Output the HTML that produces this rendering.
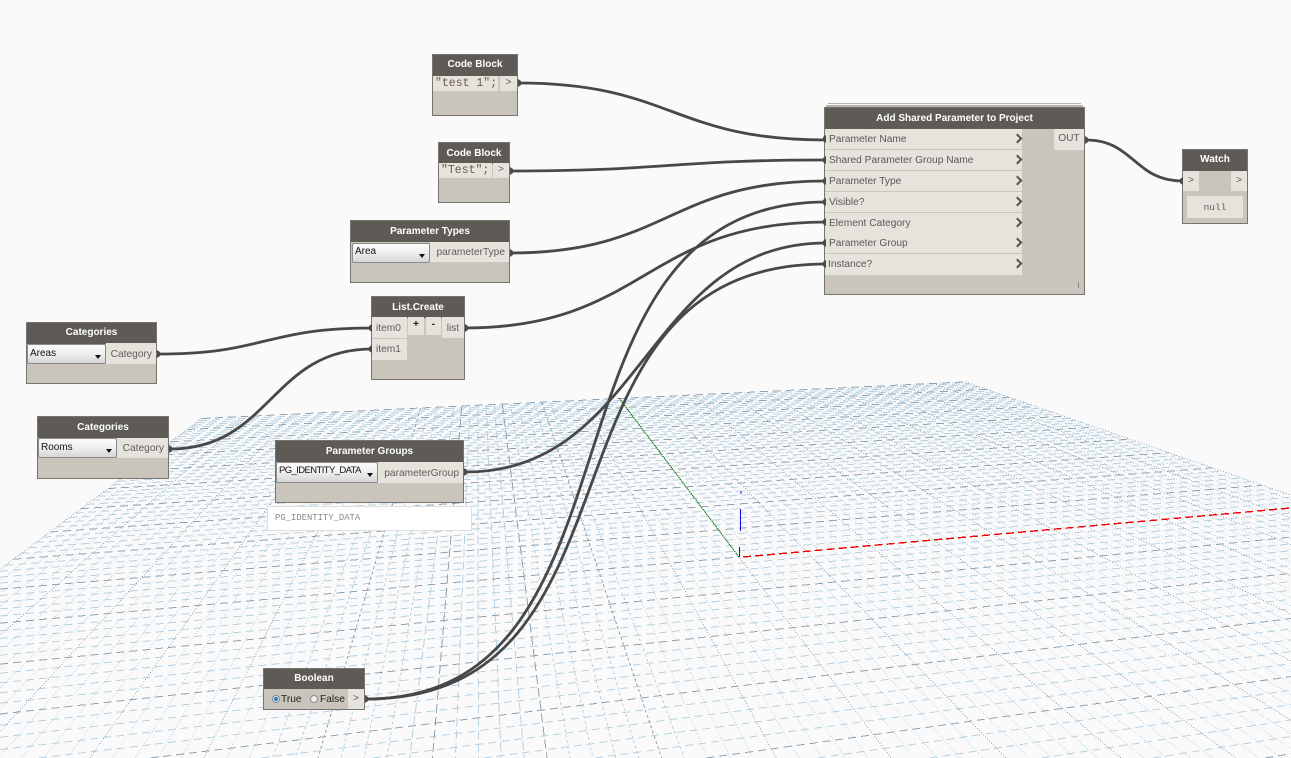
<!DOCTYPE html>
<html><head><meta charset="utf-8"><title>Dynamo graph</title>
<style>
html,body{margin:0;padding:0;width:1291px;height:758px;overflow:hidden;background:#fafafa}
body{position:relative;font-family:"Liberation Sans",sans-serif;font-size:10.2px;color:#5a5856}
svg{position:absolute;left:0;top:0;display:block}
.n{position:absolute;box-sizing:border-box;background:#c9c5bd;border:1px solid #77746f}
.h{position:absolute;left:0;right:0;top:0;background:#5e5b57;color:#fff;font-weight:bold;font-size:10px;text-align:center;line-height:21px}
.b{position:absolute;background:#e6e3dd;white-space:nowrap;color:#5f5d5a}
.c{position:absolute;box-sizing:border-box;background:linear-gradient(#fbfbfb,#f0f0f0 45%,#d6d6d6);border:1px solid #8b8b8b;border-radius:2px;color:#111;font-size:10px;line-height:11px;padding:2px 0 0 2px;white-space:nowrap}
.c:after{content:"";position:absolute;right:4px;top:10px;border:3px solid transparent;border-top:4px solid #111;border-bottom:0}
.m{font-family:"Liberation Mono",monospace}
.r{position:absolute;left:0;width:197px;height:20px;background:#e6e3dd;border-bottom:1px solid #c9c5bd;line-height:22px;padding-left:4px;box-sizing:border-box;white-space:nowrap}
.r:after{content:"";position:absolute;left:189px;top:6px;width:5px;height:5px;border-top:2px solid #55524f;border-right:2px solid #55524f;transform:rotate(45deg)}
.radio{position:absolute;width:8px;height:8px;border-radius:50%;border:1px solid #8a8a8a;box-sizing:border-box}
</style></head><body>
<svg id="g" width="1291" height="758" viewBox="0 0 1291 758"></svg>
<svg width="1291" height="758" viewBox="0 0 1291 758">
<g fill="none" shape-rendering="crispEdges">
<path d="M619 398L739 557" stroke="#0a7a0a" stroke-width="1" stroke-dasharray="1.5 .7"/>
<path d="M743 557L1291 508" stroke="#f00000" stroke-width="1.4" stroke-dasharray="8 4"/>
<path d="M741 491V494M740.5 509V531M739.5 547V557" stroke="#1010e0" stroke-width="1.2"/>
</g>
<g fill="none" stroke="#484848" stroke-width="2.8">
<path d="M518 83C672 83 672 140 826 140"/>
<path d="M510 171C668 171 668 160 826 160"/>
<path d="M510 253C668 253 668 181 826 181"/>
<path d="M366 699C660 699 522 202 826 202"/>
<path d="M366 699C660 699 522 264 826 264"/>
<path d="M465 328C645 328 645 222 826 222"/>
<path d="M465 472C645 472 645 243 826 243"/>
<path d="M159 354C265 354 265 328 372 328"/>
<path d="M170 449C271 449 271 349 372 349"/>
<path d="M1086 140C1134 140 1134 181 1183 181"/>
</g>
</svg>

<div class="n" style="left:432px;top:54px;width:86px;height:62px"><div class="h" style="height:21px;line-height:19px">Code Block</div>
<div class="b m" style="left:0;top:21px;width:65px;height:15px;font-size:11.5px;line-height:15px;padding-left:2px;box-sizing:border-box;color:#6e5a48">"test 1";</div>
<div class="b" style="left:67px;top:21px;width:17px;height:15px;text-align:center;line-height:14px">&gt;</div></div>

<div class="n" style="left:438px;top:142px;width:72px;height:61px"><div class="h" style="height:21px">Code Block</div>
<div class="b m" style="left:0;top:20px;width:53px;height:15px;font-size:11.5px;line-height:15px;padding-left:2px;box-sizing:border-box;color:#6e5a48">"Test";</div>
<div class="b" style="left:54px;top:20px;width:16px;height:15px;text-align:center;line-height:14px">&gt;</div></div>

<div class="n" style="left:350px;top:220px;width:160px;height:63px"><div class="h" style="height:21px">Parameter Types</div>
<div class="c" style="left:1px;top:22px;width:78px;height:20px">Area</div>
<div class="b" style="left:79px;top:21px;width:79px;height:20px;line-height:22px;text-align:right;padding-right:4px;box-sizing:border-box">parameterType</div></div>

<div class="n" style="left:371px;top:296px;width:94px;height:84px"><div class="h" style="height:21px">List.Create</div>
<div class="b" style="left:0;top:20px;width:35px;height:21px;line-height:23px;padding-left:4px;box-sizing:border-box">item0</div>
<div class="b" style="left:0;top:42px;width:35px;height:21px;line-height:21px;padding-left:4px;box-sizing:border-box">item1</div>
<div class="b" style="left:36px;top:20px;width:16px;height:18px;line-height:16px;text-align:center;color:#222;font-weight:bold">+</div>
<div class="b" style="left:54px;top:20px;width:15px;height:18px;line-height:16px;text-align:center;color:#222;font-weight:bold">-</div>
<div class="b" style="left:70px;top:20px;width:22px;height:21px;line-height:23px;text-align:center">list</div></div>

<div class="n" style="left:26px;top:322px;width:131px;height:62px"><div class="h" style="height:21px;line-height:19px">Categories</div>
<div class="c" style="left:0;top:21px;width:79px;height:20px;padding-top:3px">Areas</div>
<div class="b" style="left:79px;top:20px;width:50px;height:21px;line-height:23px;text-align:right;padding-right:4px;box-sizing:border-box">Category</div></div>

<div class="n" style="left:37px;top:416px;width:132px;height:63px"><div class="h" style="height:21px">Categories</div>
<div class="c" style="left:0;top:21px;width:79px;height:20px;padding-top:3px">Rooms</div>
<div class="b" style="left:79px;top:21px;width:51px;height:20px;line-height:22px;text-align:right;padding-right:4px;box-sizing:border-box">Category</div></div>

<div class="n" style="left:275px;top:440px;width:189px;height:63px"><div class="h" style="height:21px">Parameter Groups</div>
<div class="c" style="left:0;top:21px;width:102px;height:21px;font-size:9.5px;letter-spacing:-.6px">PG_IDENTITY_DATA</div>
<div class="b" style="left:102px;top:21px;width:85px;height:21px;line-height:23px;text-align:right;padding-right:4px;box-sizing:border-box">parameterGroup</div></div>

<div class="m" style="position:absolute;left:267px;top:506px;width:205px;height:25px;box-sizing:border-box;background:#fff;border:1px solid #dedede;color:#8a8a8a;font-size:8.9px;line-height:23px;padding-left:7px">PG_IDENTITY_DATA</div>

<div class="n" style="left:263px;top:668px;width:102px;height:42px"><div class="h" style="height:20px;line-height:19px">Boolean</div>
<div class="radio" style="left:8px;top:26px;background:radial-gradient(#1a78c8 40%,#d8e8f4 55%)"></div>
<div style="position:absolute;left:17px;top:25px;color:#222;line-height:12px">True</div>
<div class="radio" style="left:46px;top:26px;background:#eee"></div>
<div style="position:absolute;left:56px;top:25px;color:#222;line-height:12px">False</div>
<div class="b" style="left:84px;top:20px;width:16px;height:20px;line-height:20px;text-align:center">&gt;</div></div>

<div style="position:absolute;left:828px;top:103px;width:253px;height:1px;background:#b5b2ac"></div>
<div style="position:absolute;left:826px;top:105px;width:257px;height:2px;background:#b5b2ac"></div>
<div class="n" style="left:824px;top:107px;width:261px;height:188px"><div class="h" style="height:21px;line-height:21px">Add Shared Parameter to Project</div>
<div class="r" style="top:21px;height:21px">Parameter Name</div>
<div class="r" style="top:42px;height:21px">Shared Parameter Group Name</div>
<div class="r" style="top:63px;height:21px">Parameter Type</div>
<div class="r" style="top:84px;height:21px">Visible?</div>
<div class="r" style="top:105px;height:21px">Element Category</div>
<div class="r" style="top:125px;height:21px">Parameter Group</div>
<div class="r" style="top:146px;height:21px;border:0;padding-left:3px">Instance?</div>
<div class="b" style="left:229px;top:21px;width:30px;height:21px;line-height:20px;text-align:center">OUT</div>
<div style="position:absolute;left:253px;top:174px;width:1px;height:6px;background:#8a8782"></div></div>

<div class="n" style="left:1182px;top:149px;width:66px;height:75px"><div class="h" style="height:21px;line-height:19px">Watch</div>
<div class="b" style="left:0;top:21px;width:16px;height:20px;line-height:19px;text-align:center">&gt;</div>
<div class="b" style="left:48px;top:21px;width:16px;height:20px;line-height:19px;text-align:center">&gt;</div>
<div class="b m" style="left:4px;top:46px;width:56px;height:22px;line-height:23px;text-align:center;font-size:9.5px">null</div></div>

<svg width="1291" height="758" viewBox="0 0 1291 758"><g fill="#4a4a4a">
<path d="M823 137l3-2v8l-3-2zM823 158l3-2v8l-3-2zM823 179l3-2v8l-3-2zM823 200l3-2v8l-3-2zM823 220l3-2v8l-3-2zM823 241l3-2v8l-3-2zM823 262l3-2v8l-3-2z"/>
<path d="M1085 136l3 2v4l-3 2zM518 79l3 2v4l-3 2zM510 167l3 2v4l-3 2zM510 249l3 2v4l-3 2zM465 324l3 2v4l-3 2zM464 468l3 2v4l-3 2zM157 350l3 2v4l-3 2zM169 445l3 2v4l-3 2zM365 695l3 2v4l-3 2z"/>
<path d="M369 326l3-2v8l-3-2zM369 347l3-2v8l-3-2zM1180 179l3-2v8l-3-2z"/>
</g></svg>
<script>
(function(){
var O=[739,557],VX=[4690,203],VY=[478,212],a=.172,b=.85,N=50,s="";
function P(u,v){var w=1+a*u+b*v;return[(O[0]+a*u*VX[0]+b*v*VY[0])/w,(O[1]+a*u*VX[1]+b*v*VY[1])/w];}
function W(u,v){return 1+a*u+b*v;}
function clip(p,q){
  var t0=0,t1=1,dx=q[0]-p[0],dy=q[1]-p[1];
  var cs=[[-dx,p[0]],[dx,1291-p[0]],[-dy,p[1]],[dy,758-p[1]]];
  for(var i=0;i<4;i++){
    var c=cs[i][0],r=cs[i][1];
    if(c===0){if(r<0)return null;continue;}
    var t=r/c;
    if(c<0){if(t>t1)return null;if(t>t0)t0=t;}
    else{if(t<t0)return null;if(t<t1)t1=t;}
  }
  return[[p[0]+t0*dx,p[1]+t0*dy],[p[0]+t1*dx,p[1]+t1*dy]];
}
function line(u0,v0,u1,v1,dark,dir){
  var w0=W(u0,v0),w1=W(u1,v1),m=.03;
  if(w0<m&&w1<m)return;
  if(w1<m){var t=(w0-m)/(w0-w1);u1=u0+(u1-u0)*t;v1=v0+(v1-v0)*t;}
  if(w0<m){var t2=(w1-m)/(w1-w0);u0=u1+(u0-u1)*t2;v0=v1+(v0-v1)*t2;}
  var p=P(u0,v0),q=P(u1,v1),sl=Math.abs((q[1]-p[1])/((q[0]-p[0])||.001));
  var c=clip(p,q);if(!c)return;
  var dash=dir?'8 5':(sl>6?'9 4':(sl>2.6?'3 2.5':'1 1.9'));
  s+='<path d="M'+c[0][0].toFixed(1)+' '+c[0][1].toFixed(1)+'L'+c[1][0].toFixed(1)+' '+c[1][1].toFixed(1)+'" stroke="'+(dark?'#8fa3b3':'#b9d2e2')+'" stroke-dasharray="'+dash+'"/>';
}
for(var i=-N;i<=N;i++){
  var k=i/N,d=(i%5===0);
  if(!d){line(-1,k,1,k,false,true);line(k,1,k,-1,false,false);}
}
for(i=-N;i<=N;i+=5){k=i/N;if(i!==0){line(-1,k,1,k,true,true);}line(k,1,k,-1,true,false);}
line(-1,0,0,0,true,true);
document.getElementById('g').innerHTML='<g fill="none" stroke-width="1" shape-rendering="crispEdges">'+s+'</g>';
})();
</script>
</body></html>
